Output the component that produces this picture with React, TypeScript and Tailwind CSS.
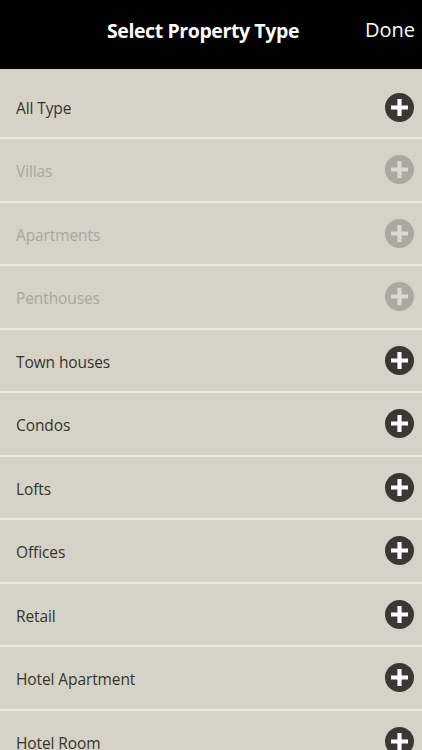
const types = [
  { name: 'All Type', enabled: true },
  { name: 'Villas', enabled: false },
  { name: 'Apartments', enabled: false },
  { name: 'Penthouses', enabled: false },
  { name: 'Town houses', enabled: true },
  { name: 'Condos', enabled: true },
  { name: 'Lofts', enabled: true },
  { name: 'Offices', enabled: true },
  { name: 'Retail', enabled: true },
  { name: 'Hotel Apartment', enabled: true },
  { name: 'Hotel Room', enabled: true },
]

function AddIcon({ enabled }: { enabled: boolean }) {
  return (
    <svg width="29" height="29" viewBox="0 0 29 29" className="shrink-0">
      <circle cx="14.5" cy="14.5" r="14.5" fill={enabled ? '#393835' : '#aaa89f'} />
      <path
        d="M14.5 6v17M6 14.5h17"
        stroke={enabled ? '#ffffff' : '#dcd9cf'}
        strokeWidth="4.2"
      />
    </svg>
  )
}

export default function App() {
  return (
    <div className="h-[750px] w-[422px] overflow-hidden bg-[#d6d3c6] font-['Open_Sans',sans-serif]">
      {/* Header */}
      <header className="relative flex h-[69px] items-start justify-center bg-black pt-[16px] text-white">
        <h1 className="mr-[16px] text-[19.5px] font-bold tracking-[-0.4px]">Select Property Type</h1>
        <button className="absolute right-[7px] top-[15px] text-[20px]">Done</button>
      </header>

      {/* List */}
      <ul>
        {types.map((t, i) => (
          <li
            key={t.name}
            className={`flex items-center justify-between pl-4 pr-[8px] ${
              i === 0 ? 'h-[68px] pt-[8px]' : 'h-[63.5px] border-t-2 border-[#ebe8df]'
            }`}
          >
            <span
              className={`pt-[4px] text-[15.5px] tracking-[-0.1px] ${
                t.enabled ? 'text-[#35342f]' : 'text-[#a8a69d]'
              }`}
            >
              {t.name}
            </span>
            <AddIcon enabled={t.enabled} />
          </li>
        ))}
      </ul>
    </div>
  )
}
